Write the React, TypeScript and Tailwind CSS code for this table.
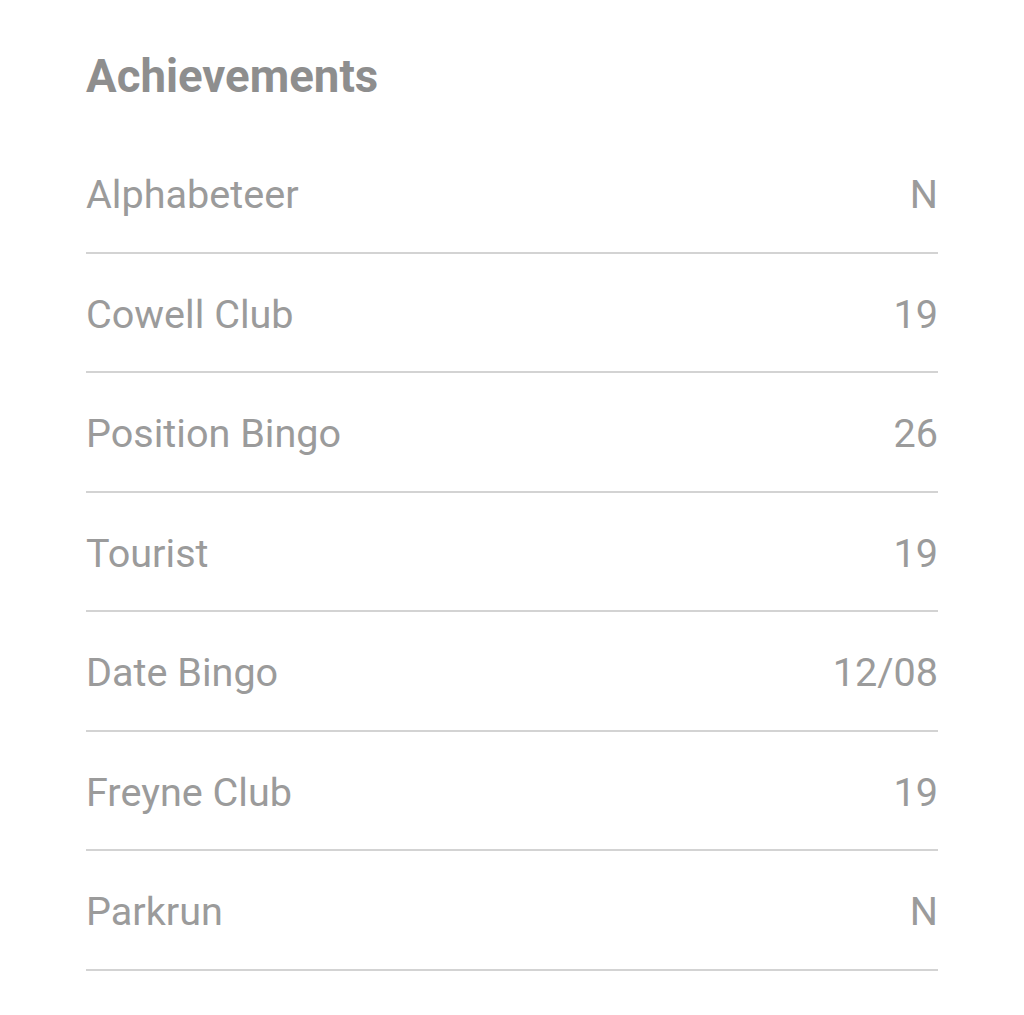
import React from "react";

const rows: [string, string][] = [
  ["Alphabeteer", "N"],
  ["Cowell Club", "19"],
  ["Position Bingo", "26"],
  ["Tourist", "19"],
  ["Date Bingo", "12/08"],
  ["Freyne Club", "19"],
  ["Parkrun", "N"],
];

export default function App() {
  return (
    <div
      className="w-[1024px] h-[1015px] bg-white px-[86px]"
      style={{ fontFamily: "Roboto, 'Liberation Sans', sans-serif" }}
    >
      <div className="h-[134px] pt-[54px]">
        <h1 className="text-[45.6px] leading-[46px] font-bold text-[#8e8e8e]">Achievements</h1>
      </div>
      <div className="flex flex-col">
        {rows.map(([label, value]) => (
          <div
            key={label}
            className="h-[119.5px] pt-[5px] flex items-center justify-between border-b-2 border-[#d3d3d3] text-[39.6px] leading-[40px] text-[#9b9b9b]"
          >
            <span>{label}</span>
            <span>{value}</span>
          </div>
        ))}
      </div>
    </div>
  );
}
